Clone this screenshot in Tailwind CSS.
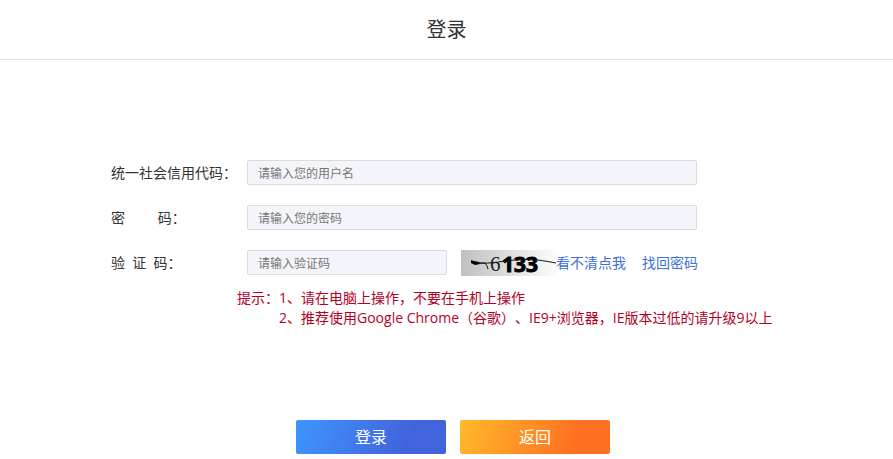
<!DOCTYPE html>
<html lang="zh-CN">
<head>
    <meta charset="UTF-8">
    <meta name="viewport" content="width=device-width, initial-scale=1.0">
    <title>登录</title>
    <script src="https://cdn.jsdelivr.net/npm/@tailwindcss/browser@4"></script>
</head>
<body class="bg-white text-sm text-[#333] font-['Open_Sans','Noto_Sans_CJK_SC',sans-serif]">
    <header class="h-[60px] flex justify-center items-center border-b border-[#ddd]">
        <h1 class="text-xl">登录</h1>
    </header>
    <form class="w-full max-w-[671px] mx-auto pt-[100px]">
        <div class="flex flex-col gap-5">
            <div class="flex items-center h-[25px]">
                <label for="username" class="w-[136px] shrink-0">统一社会信用代码：</label>
                <input id="username" type="text" placeholder="请输入您的用户名" class="w-[450px] h-[25px] px-2.5 pt-0.5 text-xs bg-[#f4f5fa] border border-[#dcdcdf] rounded-xs placeholder:text-[#757575]">
            </div>
            <div class="flex items-center h-[25px]">
                <label for="password" class="w-[136px] shrink-0">密&nbsp;&nbsp;&nbsp;&nbsp;&nbsp;&nbsp;&nbsp;&nbsp;&nbsp;码：</label>
                <input id="password" type="password" placeholder="请输入您的密码" class="w-[450px] h-[25px] px-2.5 pt-0.5 text-xs bg-[#f4f5fa] border border-[#dcdcdf] rounded-xs placeholder:text-[#757575]">
            </div>
            <div class="flex items-center h-[25px]">
                <label for="captcha" class="w-[136px] shrink-0">验&nbsp;&nbsp;证&nbsp;&nbsp;码：</label>
                <input id="captcha" type="text" placeholder="请输入验证码" class="w-[200px] h-[25px] px-2.5 pt-0.5 text-xs bg-[#f4f5fa] border border-[#dcdcdf] rounded-xs placeholder:text-[#757575]">
                <!-- captcha picture, its right end runs under the link -->
                <svg class="ml-3.5 -mr-[5px] shrink-0 overflow-visible" width="100" height="26" viewBox="0 0 100 26" role="img" aria-label="验证码">
                    <defs>
                        <linearGradient id="fade">
                            <stop offset="0" stop-color="#c0c0c0"/>
                            <stop offset="1" stop-color="#fff"/>
                        </linearGradient>
                    </defs>
                    <rect width="100" height="26" fill="url(#fade)"/>
                    <text x="29" y="21" font-family="Liberation Serif, serif" font-size="21" fill="#222">6</text>
                    <text x="41" y="22" font-family="Open Sans, sans-serif" font-weight="bold" font-size="21" fill="#000" stroke="#000" stroke-width="1">133</text>
                    <path d="M15 13L24 13Q26 15 27 19" fill="none" stroke="#111" stroke-width="1"/>
                    <path d="M10 10L13 11L18 12L19 14L14 15L10 13Z" fill="#000"/>
                    <path d="M15 13C32 14 40 11 54 10S74 9 95 13" fill="none" stroke="#111" stroke-width="1"/>
                </svg>
                <a href="#" class="text-[#4070d8] whitespace-nowrap">看不清点我</a>
                <a href="#" class="ml-4 text-[#4070d8] whitespace-nowrap">找回密码</a>
            </div>
        </div>
        <div class="mt-[13px] pl-[126px] flex leading-5 text-[#b5001f] [text-spacing-trim:space-all]">
            <span class="shrink-0">提示：</span>
            <div>
                <p>1、请在电脑上操作，不要在手机上操作</p>
                <p class="whitespace-nowrap">2、推荐使用Google Chrome（谷歌）、IE9+浏览器，IE版本过低的请升级9以上</p>
            </div>
        </div>
        <div class="mt-[92px] pl-[185px] flex gap-3.5 text-base text-white">
            <button type="submit" class="w-[150px] h-[34px] rounded-xs bg-linear-110 from-[#3c96ff] to-[#4163db] to-75%">登录</button>
            <button type="button" class="w-[150px] h-[34px] rounded-xs bg-linear-110 from-[#ffb92b] to-[#ff7022] to-75%">返回</button>
        </div>
    </form>
</body>
</html>
